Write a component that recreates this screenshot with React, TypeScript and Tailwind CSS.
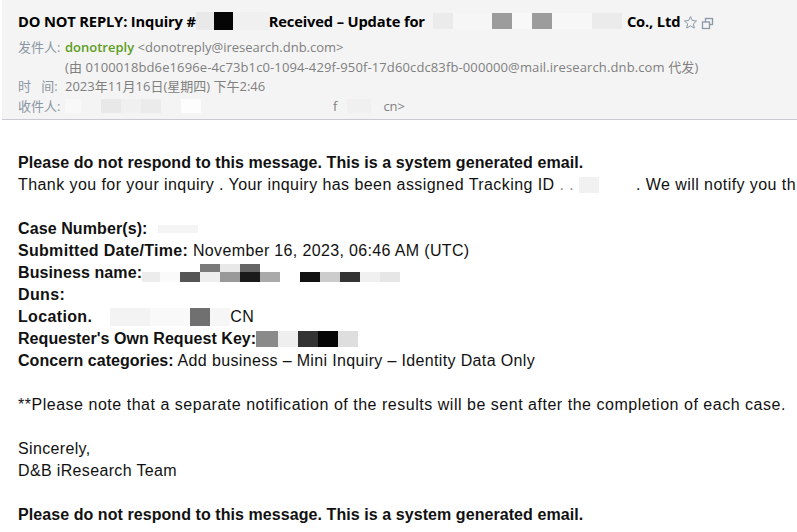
import React from "react";

const B = ({ w, c, h = 14 }: { w: number; c: string; h?: number }) => (
  <span className="inline-block align-middle" style={{ width: w, height: h, background: c }} />
);

const Star = () => (
  <svg width="15" height="15" viewBox="0 0 24 24" className="inline-block">
    <path d="M12 2.5l2.9 6.3 6.8.7-5.1 4.6 1.5 6.8L12 17.4l-6.1 3.5 1.5-6.8-5.1-4.6 6.8-.7z" fill="none" stroke="#8a98a8" strokeWidth="1.6" strokeLinejoin="round" />
  </svg>
);

const Win = () => (
  <svg width="13" height="13" viewBox="0 0 13 13" className="inline-block">
    <rect x="4.5" y="1.5" width="7" height="6" fill="none" stroke="#8a98a8" strokeWidth="1.3" />
    <rect x="1.5" y="5" width="7" height="6.5" fill="#f4f4f4" stroke="#8a98a8" strokeWidth="1.3" />
  </svg>
);

export default function App() {
  const body = "font-['Liberation_Sans',Arial,sans-serif] text-[16px] text-[#111]";
  return (
    <div className="w-[797px] h-[532px] bg-white overflow-hidden">
      <div className="bg-[#f4f4f4] border-b border-[#c9c9d2] ml-[2px] h-[120px] pt-[10px] pl-[16px] font-['DejaVu_Sans','Noto_Sans_CJK_SC',sans-serif]">
        <div className="flex items-center h-[22px] text-[14.7px] font-bold text-black whitespace-nowrap font-['Open_Sans',sans-serif] tracking-[-0.15px]">
          <span>DO NOT REPLY: Inquiry #</span>
          <B w={18} c="#e9e9e9" h={18} />
          <B w={19} c="#050505" h={18} />
          <B w={36} c="#f0f0f0" h={18} />
          <span>Received – Update for</span>
          <span className="w-[8px]" />
          <B w={20} c="#ebebeb" h={16} />
          <B w={39} c="#f6f6f6" h={16} />
          <B w={20} c="#9c9c9c" h={16} />
          <B w={20} c="#f8f8f8" h={16} />
          <B w={20} c="#9c9c9c" h={16} />
          <B w={40} c="#f7f7f7" h={16} />
          <B w={30} c="#ebebeb" h={16} />
          <span className="w-[5px]" />
          <span>Co., Ltd</span>
          <span className="ml-[3px] mt-[-1px]"><Star /></span>
          <span className="ml-[3px]"><Win /></span>
        </div>
        <div className="mt-[6px] text-[13px] leading-[19.5px] text-[#808080] font-['Open_Sans','Noto_Sans_CJK_SC',sans-serif] whitespace-nowrap">
          <div className="flex">
            <span className="w-[47px] text-[#8b95a3]">发件人:</span>
            <span className="font-semibold text-[#5d9d21]">donotreply</span>
            <span>&nbsp;&lt;donotreply@iresearch.dnb.com&gt;</span>
          </div>
          <div className="pl-[47px] tracking-[0.12px]">(由 0100018bd6e1696e-4c73b1c0-1094-429f-950f-17d60cdc83fb-000000@mail.iresearch.dnb.com 代发)</div>
          <div className="flex">
            <span className="w-[47px] text-[#8b95a3]">时&nbsp;&nbsp;&nbsp;间:</span>
            <span>2023年11月16日(星期四) 下午2:46</span>
          </div>
          <div className="flex items-center">
            <span className="w-[47px] text-[#8b95a3]">收件人:</span>
            <B w={16} c="#f8f8f8" />
            <span className="w-[20px]" />
            <B w={20} c="#e8e8e8" />
            <B w={20} c="#f0f0f0" />
            <B w={20} c="#ebebeb" />
            <span className="w-[20px]" />
            <B w={20} c="#fdfdfd" />
            <span className="w-[132px]" />
            <span>f</span>
            <span className="w-[10px]" />
            <B w={24} c="#f0f0f0" />
            <span className="w-[12px]" />
            <span>cn&gt;</span>
          </div>
        </div>
      </div>

      <div className={`${body} pl-[18px] pt-[32px] leading-[22px] whitespace-nowrap tracking-[0.35px]`}>
        <div className="font-bold tracking-[0.07px]">Please do not respond to this message. This is a system generated email.</div>
        <div className="flex items-center tracking-[0.43px]">
          <span>Thank you for your inquiry . Your inquiry has been assigned Tracking ID</span>
          <span className="text-[#888]">&nbsp;. .</span>
          <span className="w-[5px]" />
          <B w={20} c="#f1f1f1" h={16} />
          <span className="w-[37px]" />
          <span>. We will notify you th</span>
        </div>
        <div className="h-[22px]" />
        <div className="flex items-center">
          <span className="font-bold tracking-[0.1px]">Case Number(s):</span>
          <span className="w-[10px]" />
          <B w={40} c="#f4f4f4" h={8} />
        </div>
        <div><span className="font-bold tracking-[0.3px]">Submitted Date/Time:</span> November 16, 2023, 06:46 AM (UTC)</div>
        <div className="flex items-center h-[22px]">
          <span className="font-bold tracking-[0.1px]">Business name:</span>
          <span className="flex flex-col">
            <span className="flex h-[8px]">
              <B w={58} c="#ffffff" h={8} /><B w={20} c="#7a7a7a" h={8} /><B w={20} c="#e8e8e8" h={8} /><B w={20} c="#666" h={8} />
            </span>
            <span className="flex h-[10px]">
              <B w={18} c="#ececec" h={10} /><B w={20} c="#fafafa" h={10} /><B w={20} c="#555" h={10} /><B w={20} c="#eee" h={10} /><B w={20} c="#999" h={10} /><B w={20} c="#1a1a1a" h={10} /><B w={20} c="#aaa" h={10} /><B w={20} c="#fff" h={10} /><B w={20} c="#111" h={10} /><B w={20} c="#ccc" h={10} /><B w={20} c="#333" h={10} /><B w={20} c="#f0f0f0" h={10} /><B w={20} c="#e6e6e6" h={10} />
            </span>
          </span>
        </div>
        <div className="font-bold">Duns:</div>
        <div className="flex items-center">
          <span className="font-bold">Location.</span>
          <span className="w-[18px]" />
          <B w={40} c="#f3f3f3" h={18} />
          <B w={40} c="#f9f9f9" h={18} />
          <B w={20} c="#707070" h={18} />
          <B w={20} c="#f6f6f6" h={18} />
          <span>CN</span>
        </div>
        <div className="flex items-center">
          <span className="font-bold tracking-[0.05px]">Requester's Own Request Key:</span>
          <B w={22} c="#8a8a8a" h={16} />
          <B w={20} c="#efefef" h={16} />
          <B w={20} c="#333" h={16} />
          <B w={20} c="#050505" h={16} />
          <B w={20} c="#dedede" h={16} />
        </div>
        <div><span className="font-bold tracking-[0.05px]">Concern categories:</span> Add business – Mini Inquiry – Identity Data Only</div>
        <div className="h-[22px]" />
        <div className="tracking-[0.52px]">**Please note that a separate notification of the results will be sent after the completion of each case.</div>
        <div className="h-[22px]" />
        <div>Sincerely,</div>
        <div>D&amp;B iResearch Team</div>
        <div className="h-[22px]" />
        <div className="font-bold tracking-[0.07px]">Please do not respond to this message. This is a system generated email.</div>
      </div>
    </div>
  );
}
